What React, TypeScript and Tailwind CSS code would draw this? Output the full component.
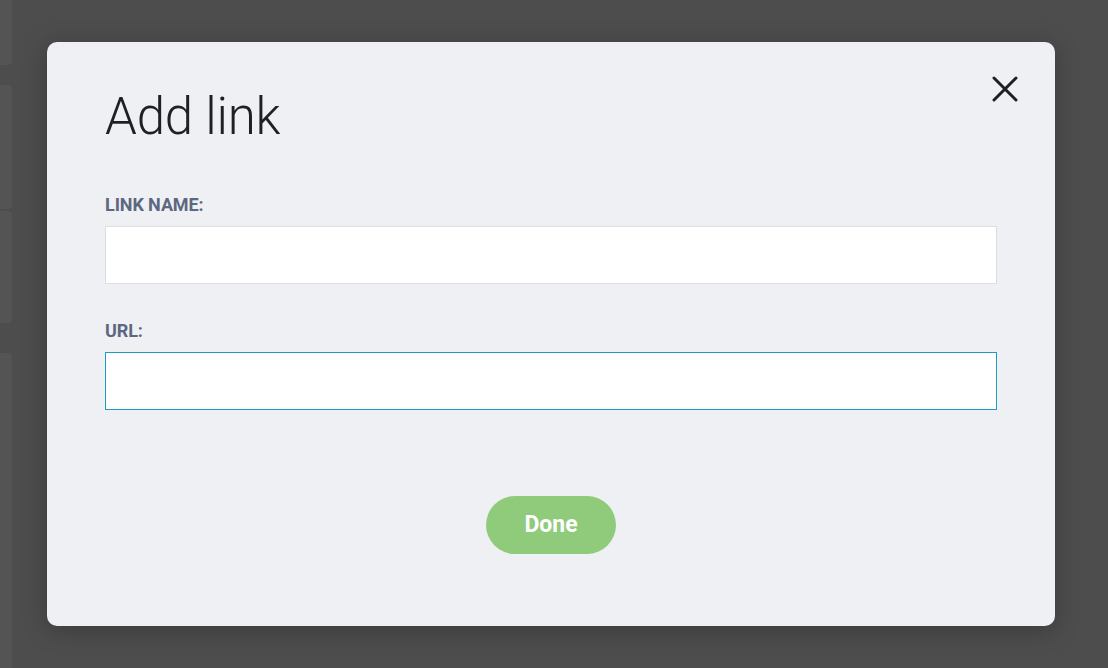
const font = { fontFamily: 'Roboto, "Liberation Sans", sans-serif' };

const Field = ({ label, focused }: { label: string; focused?: boolean }) => (
  <div className="flex flex-col">
    <label className="text-[18px] leading-[20px] font-bold text-[#5d6780] tracking-[-0.1px]">{label}</label>
    <input
      className={
        'mt-[11px] h-[58px] bg-white outline-none border ' +
        (focused ? 'border-[#1a9cc6]' : 'border-[#dddee4]')
      }
    />
  </div>
);

export default function App() {
  return (
    <div className="relative w-[1108px] h-[668px] overflow-hidden bg-[#4c4d4c]" style={font}>
      {/* faded page behind the overlay */}
      <div className="flex flex-col gap-[20px] w-[12px]">
        <div className="h-[65px] rounded-br-[4px] bg-[#535453]" />
        <div className="h-[124px] rounded-r-[4px] bg-[#535453]" />
        <div className="h-[112px] -mt-[18px] rounded-r-[4px] bg-[#535453]" />
        <div className="h-[320px] mt-[10px] rounded-r-[4px] bg-[#535453]" />
      </div>

      {/* modal */}
      <div className="absolute left-[47px] top-[42px] w-[1008px] h-[584px] rounded-[10px] bg-[#eff0f4] shadow-[0_4px_24px_rgba(0,0,0,0.25)] px-[58px] pt-[45px]">
        <button className="absolute right-[37px] top-[34px] text-[#1e1f22]">
          <svg width="26" height="26" viewBox="0 0 26 26" fill="none" stroke="currentColor" strokeWidth="3" strokeLinecap="round">
            <path d="M2 2L24 24M24 2L2 24" />
          </svg>
        </button>
        <h1 className="text-[51px] leading-[60px] font-light text-[#1f2025] tracking-[-0.2px]">Add link</h1>
        <div className="mt-[48px] flex flex-col gap-[37px]">
          <Field label="LINK NAME:" />
          <Field label="URL:" focused />
        </div>
        <div className="mt-[86px] flex justify-center">
          <button className="w-[130px] h-[58px] rounded-full bg-[#8fcb7a] text-white text-[23px] leading-[54px] font-bold">
            Done
          </button>
        </div>
      </div>
    </div>
  );
}
